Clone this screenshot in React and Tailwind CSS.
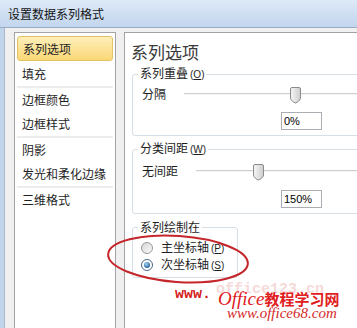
import React from 'react';

const cjk = "font-['Noto_Sans_CJK_SC','Microsoft_YaHei',sans-serif]";

const menu = [
  { label: '系列选项', active: true },
  { label: '填充' },
  { label: '边框颜色', sep: true },
  { label: '边框样式' },
  { label: '阴影', sep: true },
  { label: '发光和柔化边缘' },
  { label: '三维格式', sep: true },
];

function Thumb({ id }) {
  return (
    <svg width="11" height="17" viewBox="0 0 11 17">
      <defs>
        <linearGradient id={id} x1="0" x2="1" y1="0" y2="0">
          <stop offset="0" stopColor="#f6f6f6" />
          <stop offset="1" stopColor="#cdcdcd" />
        </linearGradient>
      </defs>
      <path
        d="M2 .5h7a1.5 1.5 0 0 1 1.5 1.5v9c0 2-3 4.5-5 5c-2-.5-5-3-5-5V2A1.5 1.5 0 0 1 2 .5z"
        fill={`url(#${id})`}
        stroke="#8a8a8a"
      />
    </svg>
  );
}

function SliderGroup({ legend, hotkey, label, value, thumbLeft, id, className }) {
  return (
    <fieldset className={`w-[240px] border border-[#d5dfe5] rounded-[3px] ${className}`}>
      <legend className="ml-[5px] px-[2px] text-[12px] leading-[16px] text-[#1e1e1e]">
        {legend}
        <span className="ml-[2px] text-[10px] font-['Liberation_Sans',sans-serif]">
          (<u>{hotkey}</u>)
        </span>
      </legend>
      <div className={`flex items-center h-[20px] pl-[9px] gap-[18px] ${id === 'g1' ? 'mt-[1px]' : 'mt-[3px]'}`}>
        <span className="text-[12px] leading-[16px] text-[#1e1e1e]">{label}</span>
        <div className="relative flex-1 h-[20px] flex items-center">
          <div className="w-full h-[2px] bg-[#cfcfcf] border-b border-[#f4f4f4]" />
          <div className="absolute top-[3px]" style={{ left: thumbLeft }}>
            <Thumb id={id} />
          </div>
        </div>
      </div>
      <div className={`pl-[148px] pb-[5px] ${id === 'g1' ? 'mt-[8px]' : 'mt-[9px]'}`}>
        <input
          readOnly
          value={value}
          className="block w-[41px] h-[18px] border border-[#abadb3] bg-white pl-[2px] text-[11px] leading-[16px] text-black font-['Liberation_Sans',sans-serif] outline-none"
        />
      </div>
    </fieldset>
  );
}

function Radio({ checked, label, hotkey }) {
  return (
    <div className="flex items-center h-[17px] pl-[8px] gap-[8px]">
      {checked ? (
        <span className="w-[12px] h-[12px] rounded-full border border-[#48698a] bg-white flex items-center justify-center">
          <span className="w-[6px] h-[6px] rounded-full bg-[radial-gradient(circle_at_40%_35%,#a8d8f7,#1d5f96_75%)]" />
        </span>
      ) : (
        <span className="w-[12px] h-[12px] rounded-full border border-[#9a9a9a] bg-gradient-to-br from-[#d6d6d6] to-[#fbfbfb]" />
      )}
      <span className="text-[12px] leading-[16px] text-[#1e1e1e]">
        {label}
        <span className="ml-[2px] text-[10px] font-['Liberation_Sans',sans-serif]">
          (<u>{hotkey}</u>)
        </span>
      </span>
    </div>
  );
}

export default function App() {
  return (
    <div className={`relative w-[357px] h-[328px] overflow-hidden bg-[#f0f0f0] flex flex-col ${cjk}`}>
      <div className="h-[28px] shrink-0 flex items-center pl-[8px] bg-gradient-to-b from-[#dfeaf7] via-[#cfdff2] to-[#c3d6ee] border-b border-[#98acc4]">
        <span className="text-[12px] leading-[16px] text-[#141414]">设置数据系列格式</span>
      </div>

      <div className="flex-1 min-h-0 flex overflow-hidden">
        <div className="w-[5px] shrink-0 bg-[#c0d4ec] border-r border-[#a9b7c8]" />
        <div className="flex gap-[8px] pt-[4px] pl-[9px]">
          <div className="w-[102px] h-[320px] shrink-0 bg-white border border-[#a3a3a3] pt-[3px] px-[2px]">
            {menu.map((m) => (
              <div
                key={m.label}
                className={`h-[25px] flex items-center pl-[5px] text-[12px] leading-[16px] text-[#1e1e1e] ${
                  m.active
                    ? 'rounded-[3px] border border-[#e3c266] bg-gradient-to-b from-[#fdefb8] to-[#fbd776]'
                    : ''
                } ${m.sep ? 'border-t-2 border-[#ededed]' : ''}`}
              >
                {m.label}
              </div>
            ))}
          </div>

          <div className="w-[260px] h-[320px] shrink-0 bg-white border border-[#a3a3a3] pl-[7px] pt-[8px]">
            <div className="-ml-[1px] text-[17px] leading-[22px] text-[#3a3a3a]">系列选项</div>

            <SliderGroup
              id="g1"
              className="mt-[2px]"
              legend="系列重叠"
              hotkey="O"
              label="分隔"
              value="0%"
              thumbLeft={106}
            />
            <SliderGroup
              id="g2"
              className="mt-[4px]"
              legend="分类间距"
              hotkey="W"
              label="无间距"
              value="150%"
              thumbLeft={57}
            />

            <fieldset className="mt-[5px] w-[106px] border border-[#d5dfe5] rounded-[3px] pb-[4px]">
              <legend className="ml-[5px] px-[2px] text-[12px] leading-[16px] text-[#1e1e1e]">系列绘制在</legend>
              <div className="mt-[4px]">
                <Radio label="主坐标轴" hotkey="P" />
                <Radio checked label="次坐标轴" hotkey="S" />
              </div>
            </fieldset>
          </div>
        </div>
      </div>

      {/* hand-drawn highlight */}
      <svg className="absolute left-[105px] top-[232px]" width="146" height="54" viewBox="0 0 146 54">
        <ellipse cx="73" cy="27" rx="70" ry="23" transform="rotate(4 73 27)" fill="none" stroke="#c5262b" strokeWidth="2" />
      </svg>

      {/* watermark */}
      <div className="absolute left-[216px] top-[282px] text-[15px] leading-[15px] font-bold text-[#f6dada] font-['Liberation_Mono',monospace]">
        office123.cn
      </div>
      <div className="absolute left-[175px] top-[287px] text-[15px] leading-[15px] font-bold text-[#d42020] font-['Liberation_Mono',monospace]">
        www.
      </div>
      <div className="absolute left-[218px] top-[290px] flex items-end leading-[18px] text-[#e0201e]">
        <span className="text-[19px] italic font-['Liberation_Serif',serif]">Office</span>
        <span className="text-[15px] font-bold">教程学习网</span>
      </div>
      <div className="absolute left-[227px] top-[305px] text-[15px] leading-[16px] italic text-[#d42a2a] font-['Liberation_Serif',serif]">
        www.office68.com
      </div>
    </div>
  );
}
